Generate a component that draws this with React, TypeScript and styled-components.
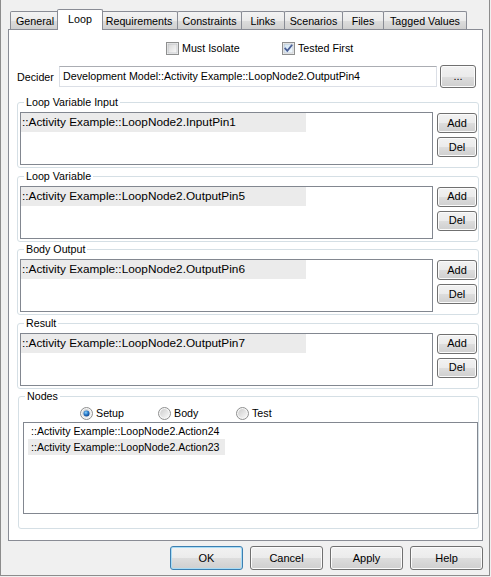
import styled, { createGlobalStyle } from 'styled-components'

const GlobalStyle = createGlobalStyle`
  html, body {
    margin: 0;
    padding: 0;
    background: #f0f0f0;
  }
  body {
    font-family: 'Liberation Sans', Arial, sans-serif;
    font-size: 10.7px;
    color: #000;
  }
  * {
    box-sizing: border-box;
  }
`

type TabDef = { label: string; width: number }

const tabs: TabDef[] = [
  { label: 'General', width: 50 },
  { label: 'Loop', width: 42 },
  { label: 'Requirements', width: 78 },
  { label: 'Constraints', width: 65 },
  { label: 'Links', width: 44 },
  { label: 'Scenarios', width: 59 },
  { label: 'Files', width: 42 },
  { label: 'Tagged Values', width: 84 },
]

const pinGroups = [
  { title: 'Loop Variable Input', item: '::Activity Example::LoopNode2.InputPin1' },
  { title: 'Loop Variable', item: '::Activity Example::LoopNode2.OutputPin5' },
  { title: 'Body Output', item: '::Activity Example::LoopNode2.OutputPin6' },
  { title: 'Result', item: '::Activity Example::LoopNode2.OutputPin7' },
]

const nodeItems = ['::Activity Example::LoopNode2.Action24', '::Activity Example::LoopNode2.Action23']

const CheckBox = ({ checked }: { checked?: boolean }) => (
  <svg width='13' height='13' viewBox='0 0 13 13'>
    <defs>
      <linearGradient id={checked ? 'cbOn' : 'cbOff'} x1='0' y1='0' x2='1' y2='1'>
        <stop offset='0' stopColor={checked ? '#cfe4f4' : '#d6d6d6'} />
        <stop offset='1' stopColor={checked ? '#f4f9fd' : '#fafafa'} />
      </linearGradient>
    </defs>
    <rect x='0.5' y='0.5' width='12' height='12' fill='#f4f4f4' stroke='#8e8f8f' />
    <rect x='2' y='2' width='9' height='9' fill={`url(#${checked ? 'cbOn' : 'cbOff'})`} stroke='#b2b6bb' strokeWidth='0.6' />
    {checked && (
      <path d='M3.3 6.6 L5.3 8.8 L9.6 3.4' fill='none' stroke='#4a5f97' strokeWidth='1.8' strokeLinecap='square' />
    )}
  </svg>
)

const Radio = ({ checked }: { checked?: boolean }) => (
  <svg width='13' height='13' viewBox='0 0 13 13'>
    <defs>
      <linearGradient id='rdBg' x1='0' y1='0' x2='1' y2='1'>
        <stop offset='0' stopColor='#cdcdcd' />
        <stop offset='1' stopColor='#f8f8f8' />
      </linearGradient>
      <radialGradient id='rdDot' cx='0.4' cy='0.35' r='0.7'>
        <stop offset='0' stopColor='#8fd3fb' />
        <stop offset='0.5' stopColor='#2a7ccb' />
        <stop offset='1' stopColor='#0f3f86' />
      </radialGradient>
    </defs>
    <circle cx='6.5' cy='6.5' r='6' fill='#f6f6f6' stroke='#8e8f8f' />
    <circle cx='6.5' cy='6.5' r='4.4' fill='url(#rdBg)' />
    {checked && <circle cx='6.5' cy='6.5' r='3' fill='url(#rdDot)' />}
  </svg>
)

const App = () => {
  return (
    <>
      <GlobalStyle />
      <Window>
        <TabStrip>
          {tabs.map((t) => (
            <Tab key={t.label} $width={t.width} $active={t.label === 'Loop'}>
              {t.label}
            </Tab>
          ))}
        </TabStrip>
        <Panel>
          <CheckRow>
            <CheckItem>
              <CheckBox />
              <span>Must Isolate</span>
            </CheckItem>
            <CheckItem>
              <CheckBox checked />
              <span>Tested First</span>
            </CheckItem>
          </CheckRow>
          <DeciderRow>
            <DeciderLabel>Decider</DeciderLabel>
            <TextBox>Development Model::Activity Example::LoopNode2.OutputPin4</TextBox>
            <PushButton $width={36} $height={23}>
              ...
            </PushButton>
          </DeciderRow>
          {pinGroups.map((g) => (
            <GroupBox key={g.title} $height={66}>
              <GroupLabel>{g.title}</GroupLabel>
              <PinRow>
                <PinList>
                  <PinItem>{g.item}</PinItem>
                </PinList>
                <SideButtons>
                  <PushButton $width={40} $height={20}>
                    Add
                  </PushButton>
                  <PushButton $width={40} $height={20}>
                    Del
                  </PushButton>
                </SideButtons>
              </PinRow>
            </GroupBox>
          ))}
          <NodesBox $height={133}>
            <GroupLabel>Nodes</GroupLabel>
            <RadioRow>
              {['Setup', 'Body', 'Test'].map((r) => (
                <RadioItem key={r}>
                  <Radio checked={r === 'Setup'} />
                  <span>{r}</span>
                </RadioItem>
              ))}
            </RadioRow>
            <NodeList>
              {nodeItems.map((n, i) => (
                <NodeItem key={n} $selected={i === 1}>
                  {n}
                </NodeItem>
              ))}
            </NodeList>
          </NodesBox>
        </Panel>
        <ButtonBar>
          <PushButton $width={73} $height={24} $default>
            OK
          </PushButton>
          <PushButton $width={73} $height={24}>
            Cancel
          </PushButton>
          <PushButton $width={73} $height={24}>
            Apply
          </PushButton>
          <PushButton $width={73} $height={24}>
            Help
          </PushButton>
        </ButtonBar>
      </Window>
    </>
  )
}
export default App

const Window = styled.div`
  width: 490px;
  height: 576px;
  padding-top: 9px;
  background: #f0f0f0;
  border: 1px solid #8c8c8c;
  border-top: none;
  display: flex;
  flex-direction: column;
`
const TabStrip = styled.div`
  display: flex;
  align-items: flex-end;
  height: 21px;
  margin-left: 9px;
  margin-bottom: -1px;
  position: relative;
  z-index: 1;
`
const Tab = styled.div<{ $width: number; $active?: boolean }>`
  position: relative;
  width: ${(p) => (p.$active ? p.$width + 4 : p.$width)}px;
  height: ${(p) => (p.$active ? 21 : 18)}px;
  margin-left: ${(p) => (p.$active ? -3 : -1)}px;
  margin-right: ${(p) => (p.$active ? -2 : 0)}px;
  margin-bottom: ${(p) => (p.$active ? 0 : 1)}px;
  z-index: ${(p) => (p.$active ? 2 : 1)};
  border: 1px solid #898c95;
  border-bottom: none;
  border-radius: 2px 2px 0 0;
  background: ${(p) =>
    p.$active ? '#ffffff' : 'linear-gradient(#f3f3f3 0%, #ebebeb 50%, #dddddd 51%, #cfcfcf 100%)'};
  text-align: center;
  line-height: 14px;
  padding-top: ${(p) => (p.$active ? 2 : 2)}px;
  white-space: nowrap;
  &:first-child {
    margin-left: 0;
  }
`
const Panel = styled.div`
  margin-left: 7px;
  width: 475px;
  height: 512px;
  background: #ffffff;
  border: 1px solid #898c95;
  padding: 0 3px 0 8px;
  display: flex;
  flex-direction: column;
`
const CheckRow = styled.div`
  display: flex;
  margin-top: 12px;
  height: 13px;
  padding-left: 149px;
`
const CheckItem = styled.label`
  display: flex;
  align-items: center;
  gap: 3px;
  width: 116px;
  line-height: 13px;
  svg {
    flex: none;
  }
`
const DeciderRow = styled.div`
  display: flex;
  align-items: center;
  height: 23px;
  margin-top: 10px;
  padding-right: 3px;
`
const DeciderLabel = styled.span`
  width: 42px;
  flex: none;
`
const TextBox = styled.div`
  width: 378px;
  height: 21px;
  margin-right: 3px;
  border: 1px solid #dbdfe6;
  border-top-color: #abadb3;
  padding: 0 3px;
  line-height: 19px;
  white-space: nowrap;
  overflow: hidden;
  background: #fff;
`
const PushButton = styled.div<{ $width: number; $height: number; $default?: boolean }>`
  width: ${(p) => p.$width}px;
  height: ${(p) => p.$height}px;
  flex: none;
  display: flex;
  align-items: center;
  justify-content: center;
  border: 1px solid ${(p) => (p.$default ? '#3c7fb1' : '#707070')};
  border-radius: 3px;
  background: linear-gradient(#f2f2f2 0%, #ebebeb 50%, #dddddd 51%, #cfcfcf 100%);
  box-shadow: inset 0 0 0 1px ${(p) => (p.$default ? '#a9dcf5' : '#fbfbfb')};
  font-size: 11px;
  padding-bottom: 1px;
`
const GroupBox = styled.div<{ $height: number }>`
  position: relative;
  height: ${(p) => p.$height}px;
  border: 1px solid #d5dfe5;
  border-radius: 3px;
  margin-top: 7.5px;
  padding: 9px 1px 0 2px;
  &:nth-of-type(3) {
    margin-top: 14px;
  }
`
const GroupLabel = styled.span`
  position: absolute;
  top: -8px;
  left: 6px;
  padding: 0 2px;
  background: #fff;
  line-height: 14px;
`
const PinRow = styled.div`
  display: flex;
  gap: 4px;
`
const PinList = styled.div`
  width: 413px;
  height: 53px;
  border: 1px solid #828790;
  background: #fff;
  font-size: 11.8px;
`
const PinItem = styled.div`
  width: 285px;
  height: 19px;
  line-height: 19px;
  padding-left: 1px;
  background: #ebebeb;
  white-space: nowrap;
`
const SideButtons = styled.div`
  display: flex;
  flex-direction: column;
  gap: 4px;
  padding-top: 1px;
`
const NodesBox = styled(GroupBox)`
  margin-left: 1px;
  margin-top: 7.5px;
  padding: 10px 1px 0 4px;
`
const RadioRow = styled.div`
  display: flex;
  height: 13px;
  padding-left: 57px;
`
const RadioItem = styled.label`
  display: flex;
  align-items: center;
  gap: 3px;
  width: 78px;
  line-height: 13px;
  svg {
    flex: none;
  }
`
const NodeList = styled.div`
  margin-top: 2px;
  width: 455px;
  height: 92px;
  border: 1px solid #828790;
  background: #fff;
  padding: 0 0 0 4px;
  display: flex;
  flex-direction: column;
  align-items: flex-start;
  font-size: 10.6px;
`
const NodeItem = styled.div<{ $selected?: boolean }>`
  height: 16px;
  line-height: 16px;
  padding: 0 6px 0 3px;
  background: ${(p) => (p.$selected ? '#ebebeb' : 'transparent')};
  white-space: nowrap;
`
const ButtonBar = styled.div`
  display: flex;
  justify-content: flex-end;
  gap: 7px;
  margin-top: 5px;
  padding-right: 6px;
`
